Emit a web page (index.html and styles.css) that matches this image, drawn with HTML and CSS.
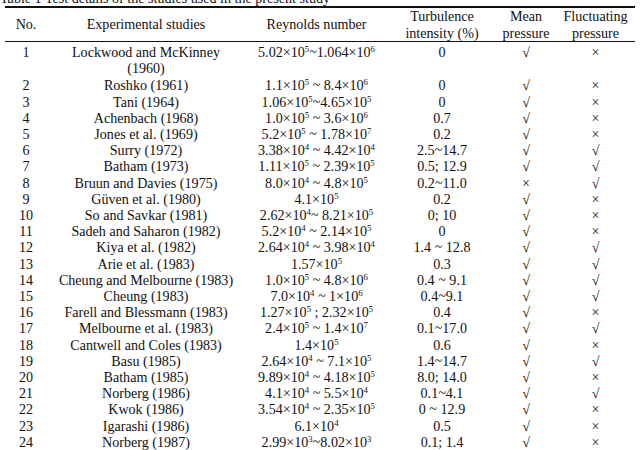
FILE: index.html
```html
<!DOCTYPE html>
<html lang="en">
<head>
    <meta charset="UTF-8">
    <title>Table 1</title>
    <link rel="stylesheet" href="styles.css">
</head>
<body>
    <div class="sheet">
        <p class="caption">Table 1 Test details of the studies used in the present study</p>
        <table class="studies">
            <colgroup>
                <col class="c-no">
                <col class="c-study">
                <col class="c-re">
                <col class="c-tu">
                <col class="c-mean">
                <col class="c-fluct">
            </colgroup>
            <thead>
                <tr>
                    <th>No.</th>
                    <th>Experimental studies</th>
                    <th>Reynolds number</th>
                    <th>Turbulence<br>intensity (%)</th>
                    <th>Mean<br>pressure</th>
                    <th>Fluctuating<br>pressure</th>
                </tr>
            </thead>
            <tbody>
                <tr class="first">
                    <td>1</td><td>Lockwood and McKinney<br>(1960)</td>
                    <td>5.02×10<span class="sup">5</span>~1.064×10<span class="sup">6</span></td>
                    <td>0</td><td>√</td><td>×</td>
                </tr>
                <tr><td>2</td><td>Roshko (1961)</td><td>1.1×10<span class="sup">5</span> ~ 8.4×10<span class="sup">6</span></td><td>0</td><td>√</td><td>×</td></tr>
                <tr><td>3</td><td>Tani (1964)</td><td>1.06×10<span class="sup">5</span>~4.65×10<span class="sup">5</span></td><td>0</td><td>√</td><td>×</td></tr>
                <tr><td>4</td><td>Achenbach (1968)</td><td>1.0×10<span class="sup">5</span> ~ 3.6×10<span class="sup">6</span></td><td>0.7</td><td>√</td><td>×</td></tr>
                <tr><td>5</td><td>Jones et al. (1969)</td><td>5.2×10<span class="sup">5</span> ~ 1.78×10<span class="sup">7</span></td><td>0.2</td><td>√</td><td>×</td></tr>
                <tr><td>6</td><td>Surry (1972)</td><td>3.38×10<span class="sup">4</span> ~ 4.42×10<span class="sup">4</span></td><td>2.5~14.7</td><td>√</td><td>√</td></tr>
                <tr><td>7</td><td>Batham (1973)</td><td>1.11×10<span class="sup">5</span> ~ 2.39×10<span class="sup">5</span></td><td>0.5; 12.9</td><td>√</td><td>√</td></tr>
                <tr><td>8</td><td>Bruun and Davies (1975)</td><td>8.0×10<span class="sup">4</span> ~ 4.8×10<span class="sup">5</span></td><td>0.2~11.0</td><td>×</td><td>√</td></tr>
                <tr><td>9</td><td>Güven et al. (1980)</td><td>4.1×10<span class="sup">5</span></td><td>0.2</td><td>√</td><td>×</td></tr>
                <tr><td>10</td><td>So and Savkar (1981)</td><td>2.62×10<span class="sup">4</span>~ 8.21×10<span class="sup">5</span></td><td>0; 10</td><td>√</td><td>×</td></tr>
                <tr><td>11</td><td>Sadeh and Saharon (1982)</td><td>5.2×10<span class="sup">4</span> ~ 2.14×10<span class="sup">5</span></td><td>0</td><td>√</td><td>×</td></tr>
                <tr><td>12</td><td>Kiya et al. (1982)</td><td>2.64×10<span class="sup">4</span> ~ 3.98×10<span class="sup">4</span></td><td>1.4 ~ 12.8</td><td>√</td><td>√</td></tr>
                <tr><td>13</td><td>Arie et al. (1983)</td><td>1.57×10<span class="sup">5</span></td><td>0.3</td><td>√</td><td>√</td></tr>
                <tr><td>14</td><td>Cheung and Melbourne (1983)</td><td>1.0×10<span class="sup">5</span> ~ 4.8×10<span class="sup">6</span></td><td>0.4 ~ 9.1</td><td>√</td><td>√</td></tr>
                <tr><td>15</td><td>Cheung (1983)</td><td>7.0×10<span class="sup">4</span> ~ 1×10<span class="sup">6</span></td><td>0.4~9.1</td><td>√</td><td>√</td></tr>
                <tr><td>16</td><td>Farell and Blessmann (1983)</td><td>1.27×10<span class="sup">5</span> ; 2.32×10<span class="sup">5</span></td><td>0.4</td><td>√</td><td>×</td></tr>
                <tr><td>17</td><td>Melbourne et al. (1983)</td><td>2.4×10<span class="sup">5</span> ~ 1.4×10<span class="sup">7</span></td><td>0.1~17.0</td><td>√</td><td>√</td></tr>
                <tr><td>18</td><td>Cantwell and Coles (1983)</td><td>1.4×10<span class="sup">5</span></td><td>0.6</td><td>√</td><td>×</td></tr>
                <tr><td>19</td><td>Basu (1985)</td><td>2.64×10<span class="sup">4</span> ~ 7.1×10<span class="sup">5</span></td><td>1.4~14.7</td><td>√</td><td>√</td></tr>
                <tr><td>20</td><td>Batham (1985)</td><td>9.89×10<span class="sup">4</span> ~ 4.18×10<span class="sup">5</span></td><td>8.0; 14.0</td><td>√</td><td>×</td></tr>
                <tr><td>21</td><td>Norberg (1986)</td><td>4.1×10<span class="sup">4</span> ~ 5.5×10<span class="sup">4</span></td><td>0.1~4.1</td><td>√</td><td>√</td></tr>
                <tr><td>22</td><td>Kwok (1986)</td><td>3.54×10<span class="sup">4</span> ~ 2.35×10<span class="sup">5</span></td><td>0 ~ 12.9</td><td>√</td><td>×</td></tr>
                <tr><td>23</td><td>Igarashi (1986)</td><td>6.1×10<span class="sup">4</span></td><td>0.5</td><td>√</td><td>×</td></tr>
                <tr><td>24</td><td>Norberg (1987)</td><td>2.99×10<span class="sup">3</span>~8.02×10<span class="sup">3</span></td><td>0.1; 1.4</td><td>√</td><td>×</td></tr>
            </tbody>
        </table>
    </div>
</body>
</html>
```

FILE: styles.css
```css
body {
    margin: 0;
    background-color: #fff;
    color: #111;
    font-family: "Liberation Serif", "Times New Roman", serif;
    font-size: 14.1px;
    overflow: hidden;
}
.sheet {
    width: 640px;
    height: 450px;
    overflow: hidden;
}
.caption {
    margin: -10px 0 0 0;
    line-height: 16px;
    white-space: nowrap;
}
.studies {
    margin-left: 5px;
    width: 630px;
    border-collapse: collapse;
    table-layout: fixed;
    border-top: 2px solid #111;
}
.c-no { width: 42px; }
.c-study { width: 198px; }
.c-re { width: 143px; }
.c-tu { width: 108px; }
.c-mean { width: 60px; }
.c-fluct { width: 79px; }
.studies th,
.studies td {
    padding: 0;
    text-align: center;
    vertical-align: middle;
    line-height: 16.2px;
    white-space: nowrap;
}
.studies th {
    font-weight: normal;
    height: 33px;
    border-bottom: 1.5px solid #111;
}
.studies tr.first td {
    padding-top: 2px;
    padding-bottom: 1px;
    vertical-align: top;
}
.sup {
    font-size: 0.62em;
    vertical-align: 0.55em;
    line-height: 0;
}
```
